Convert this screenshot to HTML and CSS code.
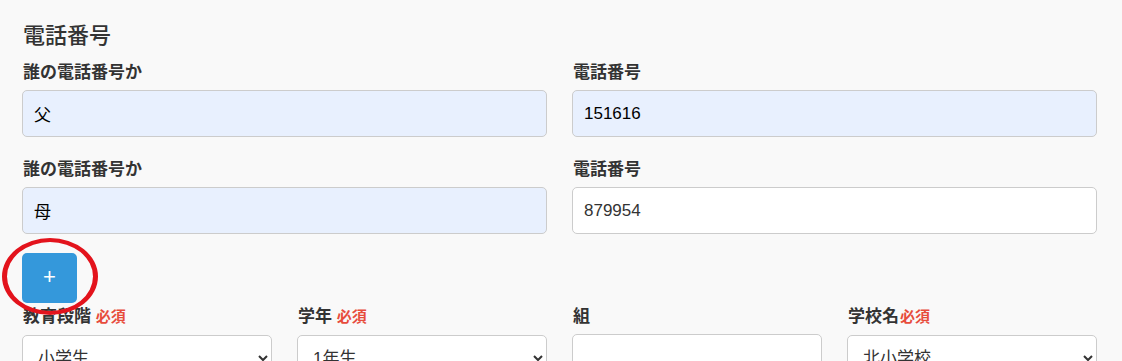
FILE: index.html
```html
<!DOCTYPE html>
<html lang="ja">
<head>
<meta charset="utf-8">
<link rel="stylesheet" href="styles.css">
</head>
<body>
<div class="page">
  <h2 class="section-title">電話番号</h2>
  <div class="grid2">
    <div class="group">
      <label class="label">誰の電話番号か</label>
      <input class="input autofill" type="text" value="父">
    </div>
    <div class="group">
      <label class="label">電話番号</label>
      <input class="input autofill" type="text" value="151616">
    </div>
    <div class="group">
      <label class="label">誰の電話番号か</label>
      <input class="input autofill" type="text" value="母">
    </div>
    <div class="group">
      <label class="label">電話番号</label>
      <input class="input" type="text" value="879954">
    </div>
  </div>
  <div class="add-wrap">
    <button class="add-btn" type="button">+</button>
    <span class="annotation"></span>
  </div>
  <div class="grid4">
    <div class="group">
      <label class="label">教育段階 <span class="req">必須</span></label>
      <select class="select"><option>小学生</option></select>
    </div>
    <div class="group">
      <label class="label">学年 <span class="req">必須</span></label>
      <select class="select"><option>1年生</option></select>
    </div>
    <div class="group">
      <label class="label">組</label>
      <input class="input" type="text" value="">
    </div>
    <div class="group">
      <label class="label">学校名<span class="req">必須</span></label>
      <select class="select"><option>北小学校</option></select>
    </div>
  </div>
</div>
</body>
</html>
```

FILE: styles.css
```css
html, body {
  margin: 0;
  padding: 0;
  background: #f9f9f9;
}
body {
  font-family: "Liberation Sans", "Noto Sans CJK JP", sans-serif;
  color: #333;
}
.page {
  padding: 20px 25px 0 22px;
}
.section-title {
  font-family: "Noto Sans CJK JP", sans-serif;
  font-size: 22px;
  line-height: 26px;
  font-weight: 500;
  color: #333;
  margin: 0 0 13px 1px;
}
.grid2 {
  display: grid;
  grid-template-columns: 525px 525px;
  column-gap: 25px;
}
.grid4 {
  display: grid;
  grid-template-columns: repeat(4, 250px);
  column-gap: 25px;
}
.group {
  display: flex;
  flex-direction: column;
  margin-bottom: 19px;
}
.label {
  font-family: "Noto Sans CJK JP", sans-serif;
  font-size: 17px;
  line-height: 24px;
  font-weight: 700;
  color: #333;
  margin: 0 0 7px 1px;
}
.req {
  color: #e74c3c;
  font-size: 15px;
  margin-left: 1px;
}
.input, .select {
  box-sizing: border-box;
  height: 47px;
  width: 100%;
  border: 1px solid #ccc;
  border-radius: 5px;
  background: #fff;
  font-family: "Liberation Sans", "Noto Sans CJK JP", sans-serif;
  font-size: 17px;
  color: #333;
  padding: 0 11px;
  margin: 0;
  outline: none;
}
.input.autofill {
  background: #e8f0fe;
  color: #000;
}
.select {
  padding: 0 11px;
}
.add-wrap {
  position: relative;
  width: 55px;
  height: 50px;
}
.add-btn {
  display: flex;
  align-items: center;
  justify-content: center;
  width: 55px;
  height: 50px;
  border: none;
  border-radius: 5px;
  background: #3498db;
  color: #fff;
  font-family: "Liberation Sans", sans-serif;
  font-size: 22px;
  line-height: 1;
  padding: 0 0 2px 0;
}
.annotation {
  position: absolute;
  left: -20px;
  top: -15px;
  width: 86px;
  height: 69px;
  border: 4px solid #e3131c;
  border-left-width: 5px;
  border-right-width: 5px;
  border-radius: 50%;
  pointer-events: none;
}
```
